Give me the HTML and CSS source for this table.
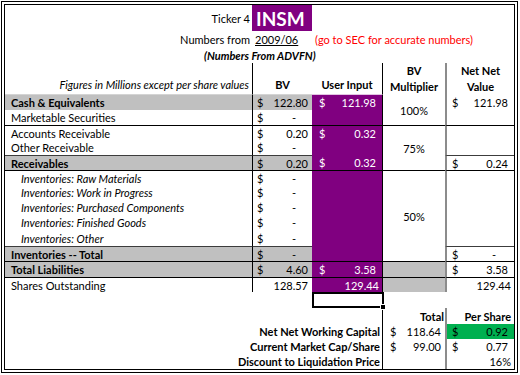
FILE: index.html
```html
<!DOCTYPE html>
<html>
<head>
<meta charset="utf-8">
<title>Net Net Calculator</title>
<link rel="stylesheet" href="styles.css">
</head>
<body>
<div class="frame">
  <div class="sheet">
    <!-- title rows -->
    <div class="c ra pr3">Ticker 4</div>
    <div class="c ticker">INSM</div>
    <div class="c s3"></div>

    <div class="c ra pr3">Numbers from</div>
    <div class="c date"><u>2009/06</u></div>
    <div class="c s3 red">(go to SEC for accurate numbers)</div>

    <div class="c s5 src">(Numbers From ADVFN)</div>

    <!-- headers -->
    <div class="c r2 hA">Figures in Millions except per share values</div>
    <div class="c r2 hB b">BV</div>
    <div class="c r2 hC b">User Input</div>
    <div class="c r2 hD b"><span>BV</span><span>Multiplier</span></div>
    <div class="c r2 hE b"><span>Net Net</span><span>Value</span></div>

    <!-- cash -->
    <div class="c lbl g b">Cash &amp; Equivalents</div>
    <div class="c bv g"><span>$</span><span>122.80</span></div>
    <div class="c ui"><span>$</span><span>121.98</span></div>
    <div class="c mult r2">100%</div>
    <div class="c nn"><span>$</span><span>121.98</span></div>

    <div class="c lbl">Marketable Securities</div>
    <div class="c bv"><span>$</span><span class="dash">-</span></div>
    <div class="c ui"></div>
    <div class="c nn"></div>

    <!-- receivables -->
    <div class="c lbl t">Accounts Receivable</div>
    <div class="c bv t"><span>$</span><span>0.20</span></div>
    <div class="c ui t"><span>$</span><span>0.32</span></div>
    <div class="c mult r3 t">75%</div>
    <div class="c nn r2 t"></div>

    <div class="c lbl">Other Receivable</div>
    <div class="c bv"><span>$</span><span class="dash">-</span></div>
    <div class="c ui"></div>

    <div class="c lbl g b tg">Receivables</div>
    <div class="c bv g tg"><span>$</span><span>0.20</span></div>
    <div class="c ui"><span>$</span><span>0.32</span></div>
    <div class="c nn tg"><span>$</span><span>0.24</span></div>

    <!-- inventories -->
    <div class="c lbl ind t">Inventories: Raw Materials</div>
    <div class="c bv t"><span>$</span><span class="dash">-</span></div>
    <div class="c ui t"></div>
    <div class="c mult r6 t">50%</div>
    <div class="c nn r5 t"></div>

    <div class="c lbl ind">Inventories: Work in Progress</div>
    <div class="c bv"><span>$</span><span class="dash">-</span></div>
    <div class="c ui"></div>

    <div class="c lbl ind">Inventories: Purchased Components</div>
    <div class="c bv"><span>$</span><span class="dash">-</span></div>
    <div class="c ui"></div>

    <div class="c lbl ind">Inventories: Finished Goods</div>
    <div class="c bv"><span>$</span><span class="dash">-</span></div>
    <div class="c ui"></div>

    <div class="c lbl ind">Inventories: Other</div>
    <div class="c bv"><span>$</span><span class="dash">-</span></div>
    <div class="c ui"></div>

    <div class="c lbl g b tg">Inventories -- Total</div>
    <div class="c bv g tg"><span>$</span><span class="dash">-</span></div>
    <div class="c ui"></div>
    <div class="c nn tg"><span>$</span><span class="dash">-</span></div>

    <!-- liabilities -->
    <div class="c lbl g b t">Total Liabilities</div>
    <div class="c bv g t"><span>$</span><span>4.60</span></div>
    <div class="c ui t"><span>$</span><span>3.58</span></div>
    <div class="c mult g t"></div>
    <div class="c nn t"><span>$</span><span>3.58</span></div>

    <div class="c lbl t">Shares Outstanding</div>
    <div class="c bv t ra">128.57</div>
    <div class="c ui t ra num">129.44</div>
    <div class="c mult g t"></div>
    <div class="c nn t ra num">129.44</div>

    <!-- selected empty cell -->
    <div class="c s2"></div>
    <div class="c sel"><span class="handle"></span></div>
    <div class="c"></div>
    <div class="c"></div>

    <!-- summary -->
    <div class="c s3 sl"></div>
    <div class="c sv ra b tot">Total</div>
    <div class="c nn ra b num">Per Share</div>

    <div class="c s3 sl b">Net Net Working Capital</div>
    <div class="c sv"><span>$</span><span>118.64</span></div>
    <div class="c nn green"><span>$</span><span>0.92</span></div>

    <div class="c s3 sl b">Current Market Cap/Share</div>
    <div class="c sv"><span>$</span><span>99.00</span></div>
    <div class="c nn"><span>$</span><span>0.77</span></div>

    <div class="c s3 sl b">Discount to Liquidation Price</div>
    <div class="c sv"></div>
    <div class="c nn ra num">16%</div>
  </div>
</div>
</body>
</html>
```

FILE: styles.css
```css
* { box-sizing: border-box; }

html, body {
  margin: 0;
  padding: 0;
  background: #ffffff;
}

body {
  padding: 1px;
  font-family: Lato, "Liberation Sans", sans-serif;
  font-size: 11px;
  color: #000000;
}

.frame {
  width: 517px;
  border: 1px solid #000;
  padding: 2px;
}

.sheet {
  display: grid;
  border: 1px solid #000;
  grid-template-columns: 248px 59px 71px 62px 69px;
  grid-template-rows: 26px 17px 15px 16px 16px repeat(9, 15px) 16px 15px 16px 15px 16px 16px 15px 15px 15px;
}

.c {
  display: flex;
  align-items: center;
  white-space: nowrap;
  line-height: 15px;
  min-width: 0;
}

.b { font-weight: bold; }
.ra { justify-content: flex-end; }
.pr3 { padding-right: 3px; }

.s2 { grid-column: span 2; }
.s3 { grid-column: span 3; }
.s5 { grid-column: span 5; }
.r2 { grid-row: span 2; }
.r3 { grid-row: span 3; }
.r5 { grid-row: span 5; }
.r6 { grid-row: span 6; }

/* title */
.ticker {
  background: #800080;
  color: #fff;
  font-weight: bold;
  font-size: 19px;
  padding-left: 4px;
  margin-left: -1px;
}
.date { padding-left: 2px; }
.red { color: #ff0000; padding-left: 3px; }
.src {
  font-weight: bold;
  font-style: italic;
  padding-left: 199px;
}

/* headers */
.hA {
  align-items: flex-end;
  justify-content: flex-end;
  font-style: italic;
  padding: 0 3px 1px 0;
  line-height: 16px;
  border-right: 1px solid #000;
  border-bottom: 1px solid #d4d4d4;
}
.hB {
  align-items: flex-end;
  justify-content: center;
  line-height: 16px;
  padding-bottom: 1px;
  border-bottom: 1px solid #d4d4d4;
}
.hC {
  align-items: flex-end;
  justify-content: center;
  line-height: 16px;
  padding-bottom: 1px;
  border-right: 1px solid #000;
  border-bottom: 1px solid #e2c4e2;
}
.hD, .hE {
  flex-direction: column;
  justify-content: center;
  line-height: 16px;
}
.hE { border-left: 2px solid #8c8c8c; }

/* body cells */
.lbl {
  padding-left: 6px;
  border-right: 1px solid #000;
}
.ind {
  padding-left: 16px;
  font-style: italic;
}
.g { background: #c0c0c0; }

.bv {
  justify-content: space-between;
  padding: 0 4px 0 4px;
}
.ui {
  background: #800080;
  color: #fff;
  justify-content: space-between;
  padding: 0 6px 0 7px;
  border-right: 1px solid #000;
}
.mult {
  justify-content: center;
}
.nn {
  justify-content: space-between;
  padding: 0 6px 0 5px;
  border-left: 2px solid #8c8c8c;
}
.ra.num, .nn.ra { justify-content: flex-end; padding-right: 3px; }
.bv.ra { justify-content: flex-end; }

.dash { margin-right: 12px; }

.t { border-top: 1px solid #000; }
.tg { border-top: 1px solid #3c3c3c; }

/* selected cell */
.sel {
  position: relative;
  border: 2px solid #000;
  margin-right: -1px;
}
.handle {
  position: absolute;
  right: -4px;
  bottom: -4px;
  width: 6px;
  height: 6px;
  background: #000;
  border: 1px solid #fff;
}

/* summary */
.sl {
  justify-content: flex-end;
  padding-right: 2px;
  border-right: 1px solid #000;
}
.sv {
  justify-content: space-between;
  padding: 0 4px 0 7px;
}
.sv.ra { justify-content: flex-end; }
.tot { padding-right: 1px; }
.green { background: #00b050; }
```
